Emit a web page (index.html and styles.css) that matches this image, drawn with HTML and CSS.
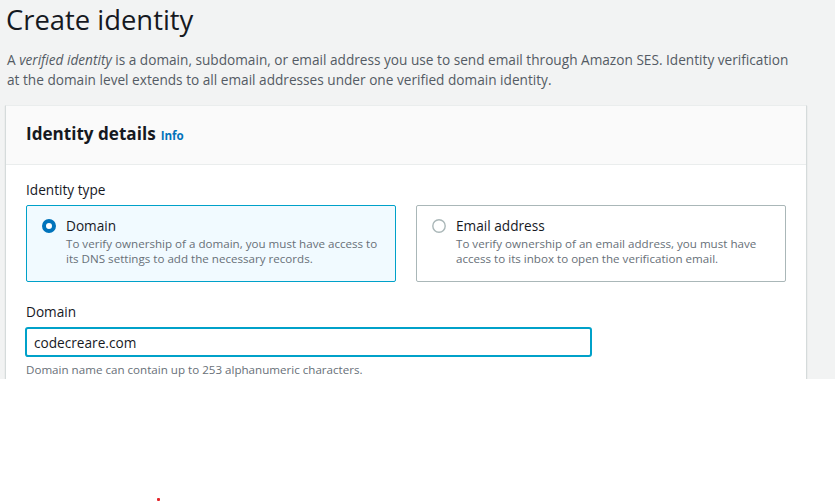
FILE: index.html
```html
<!DOCTYPE html>
<html lang="en">
<head>
<meta charset="utf-8">
<title>Create identity</title>
<link rel="stylesheet" href="styles.css">
</head>
<body>
<div class="viewport">
  <h1 class="page-title">Create identity</h1>
  <p class="page-desc">A <i>verified identity</i> is a domain, subdomain, or email address you use to send email through Amazon SES. Identity verification at the domain level extends to all email addresses under one verified domain identity.</p>
  <section class="card">
    <header class="card-header">
      <h2 class="card-title">Identity details</h2><a class="info-link">Info</a>
    </header>
    <div class="card-body">
      <div class="field-label">Identity type</div>
      <div class="tiles">
        <label class="tile tile-selected">
          <svg class="radio" width="14" height="14" viewBox="0 0 14 14"><circle cx="7" cy="7" r="5" fill="#fff" stroke="#0073bb" stroke-width="4"/></svg>
          <span class="tile-text">
            <span class="tile-title">Domain</span>
            <span class="tile-desc">To verify ownership of a domain, you must have access to its DNS settings to add the necessary records.</span>
          </span>
        </label>
        <label class="tile">
          <svg class="radio" width="14" height="14" viewBox="0 0 14 14"><circle cx="7" cy="7" r="6.2" fill="#fff" stroke="#aab7b8" stroke-width="1.4"/></svg>
          <span class="tile-text">
            <span class="tile-title">Email address</span>
            <span class="tile-desc">To verify ownership of an email address, you must have access to its inbox to open the verification email.</span>
          </span>
        </label>
      </div>
      <div class="field-label domain-label">Domain</div>
      <input class="text-input" type="text" value="codecreare.com">
      <div class="hint">Domain name can contain up to 253 alphanumeric characters.</div>
    </div>
  </section>
</div>
<div class="dot"></div>
</body>
</html>
```
FILE: styles.css
```css
html, body {
  margin: 0;
  padding: 0;
  background: #ffffff;
}

body {
  font-family: "Open Sans", sans-serif;
  color: #16191f;
  position: relative;
  height: 503px;
  overflow: hidden;
}

.viewport {
  height: 379px;
  overflow: hidden;
  background: #f2f3f3;
  padding-left: 5px;
  box-sizing: border-box;
}

.page-title {
  margin: 3px 0 0 1px;
  font-size: 27.4px;
  line-height: 34px;
  font-weight: 400;
  color: #16191f;
}

.page-desc {
  margin: 13px 0 0 2px;
  width: 790px;
  font-size: 13.65px;
  line-height: 20px;
  color: #545b64;
}

.card {
  margin-top: 15px;
  width: 802px;
  box-sizing: border-box;
  background: #ffffff;
  border: 1px solid #d5dbdb;
  border-top-color: #eaeded;
  box-shadow: 0 1px 1px rgba(0, 28, 36, 0.15);
}

.card-header {
  display: flex;
  align-items: baseline;
  background: #fafafa;
  border-bottom: 1px solid #eaeded;
  padding: 17px 20px 19px;
}

.card-title {
  margin: 0;
  font-size: 17.1px;
  line-height: 22px;
  font-weight: 700;
  color: #16191f;
}

.info-link {
  margin-left: 5px;
  font-size: 11.6px;
  font-weight: 700;
  color: #0073bb;
}

.card-body {
  padding: 15px 20px 20px;
}

.field-label {
  font-size: 13.65px;
  line-height: 20px;
  color: #16191f;
}

.tiles {
  display: grid;
  grid-template-columns: 370px 370px;
  column-gap: 20px;
  margin-top: 5px;
}

.tile {
  display: flex;
  align-items: flex-start;
  gap: 10px;
  height: 77px;
  box-sizing: border-box;
  padding: 10px 12px 0 15px;
  border: 1px solid #aab7b8;
  border-radius: 2px;
  background: #ffffff;
}

.tile-selected {
  background: #f1faff;
  border-color: #00a1c9;
}

.radio {
  flex: none;
  margin-top: 3px;
  display: block;
}

.tile-text {
  display: flex;
  flex-direction: column;
}

.tile-title {
  font-size: 13.65px;
  line-height: 20px;
  color: #16191f;
}

.tile-desc {
  font-size: 11.6px;
  line-height: 15px;
  color: #687078;
}

.domain-label {
  margin-top: 20px;
}

.text-input {
  display: block;
  margin: 5px 0 0 -1px;
  width: 567px;
  height: 30px;
  box-sizing: border-box;
  padding: 0 7px;
  border: 2px solid #00a1c9;
  border-radius: 3px;
  background: #ffffff;
  font-family: "Open Sans", sans-serif;
  font-size: 13.65px;
  color: #16191f;
  outline: none;
}

.hint {
  margin-top: 5px;
  font-size: 11.6px;
  line-height: 15px;
  color: #687078;
}

.dot {
  position: absolute;
  left: 157px;
  top: 498px;
  width: 3px;
  height: 3px;
  border-radius: 1px;
  background: #e3262b;
}
```
